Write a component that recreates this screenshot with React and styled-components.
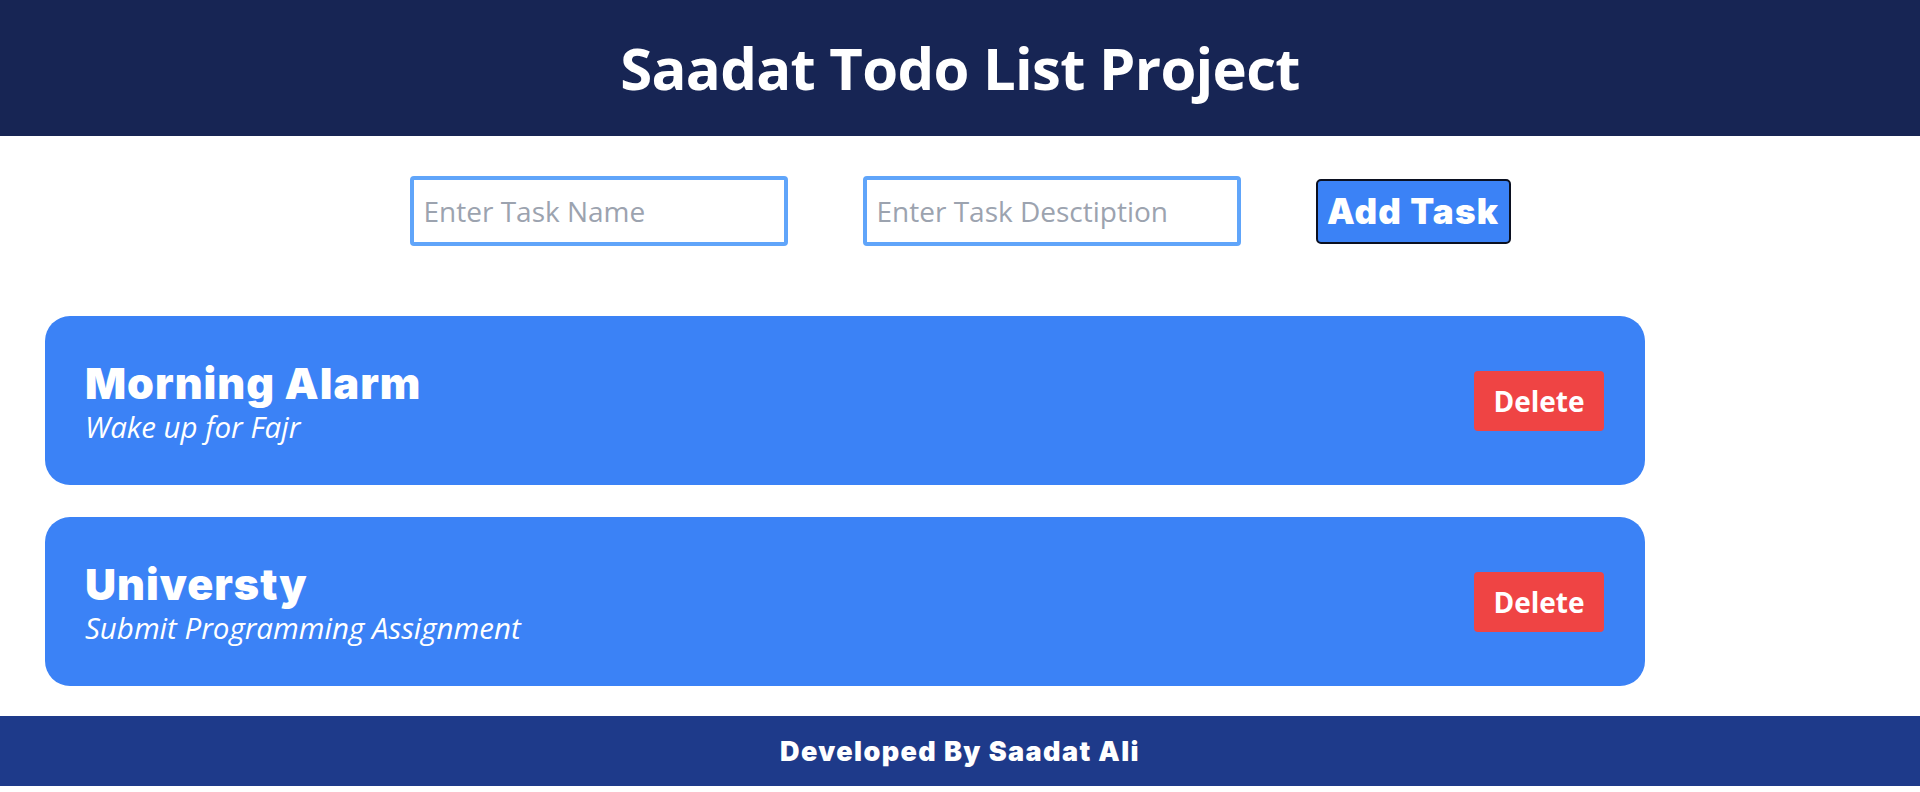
import styled, { createGlobalStyle } from "styled-components";

const TASKS = [
  { name: "Morning Alarm", desc: "Wake up for Fajr" },
  { name: "Universty", desc: "Submit Programming Assignment" }
];

const GlobalStyle = createGlobalStyle`
  body {
    margin: 0;
    background: #ffffff;
    font-family: "Open Sans", "Noto Sans", sans-serif;
  }
`;

const Header = styled.header`
  height: 136px;
  background: #172554;
  display: flex;
  align-items: center;
  justify-content: center;
`;

const Title = styled.h1`
  margin: 0;
  color: #ffffff;
  font-size: 58px;
  font-weight: 700;
  letter-spacing: -0.7px;
  line-height: 1;
`;

const Form = styled.form`
  display: flex;
  align-items: center;
  justify-content: center;
  gap: 75px;
  margin-top: 40px;
`;

const Input = styled.input`
  box-sizing: border-box;
  width: 378px;
  height: 70px;
  border: 4px solid #60a5fa;
  border-radius: 4px;
  padding: 0 10px;
  font-family: "Open Sans", sans-serif;
  font-size: 28px;
  color: #111827;
  outline: none;
  &::placeholder {
    color: #9ca3af;
  }
`;

const AddButton = styled.button`
  box-sizing: border-box;
  width: 195px;
  height: 65px;
  background: #3b82f6;
  border: 2px solid #0b1020;
  border-radius: 5px;
  color: #ffffff;
  font-family: "Inter", sans-serif;
  font-weight: 900;
  font-size: 35px;
  letter-spacing: 1.2px;
  padding: 0;
`;

const List = styled.ul`
  list-style: none;
  margin: 70px 0 0 45px;
  padding: 0;
  width: 1600px;
  display: flex;
  flex-direction: column;
  gap: 32px;
`;

const Card = styled.li`
  box-sizing: border-box;
  height: 169px;
  background: #3b82f6;
  border-radius: 25px;
  padding: 4px 41px 0 40px;
  display: flex;
  align-items: center;
  justify-content: space-between;
`;

const CardText = styled.div`
  display: flex;
  flex-direction: column;
  gap: 2px;
  color: #ffffff;
`;

const CardTitle = styled.h2`
  margin: 0;
  font-family: "Inter", sans-serif;
  font-weight: 900;
  font-size: 43px;
  letter-spacing: 1px;
  line-height: 1.1;
`;

const CardDesc = styled.p`
  margin: 0;
  font-style: italic;
  font-size: 29.5px;
  line-height: 1.2;
`;

const DeleteButton = styled.button`
  width: 130px;
  height: 60px;
  margin-top: -4px;
  background: #ef4444;
  border: none;
  border-radius: 4px;
  color: #ffffff;
  font-family: "Open Sans", sans-serif;
  font-weight: 700;
  font-size: 28px;
  padding: 0;
`;

const Footer = styled.footer`
  margin-top: 30px;
  height: 70px;
  background: #1e3a8a;
  display: flex;
  align-items: center;
  justify-content: center;
  color: #ffffff;
  font-family: "Inter", sans-serif;
  font-weight: 900;
  font-size: 27px;
  letter-spacing: 1.4px;
`;

export default function App() {
  return (
    <>
      <GlobalStyle />
      <Header>
        <Title>Saadat Todo List Project</Title>
      </Header>
      <Form onSubmit={e => e.preventDefault()}>
        <Input placeholder="Enter Task Name" />
        <Input placeholder="Enter Task Desctiption" />
        <AddButton type="submit">Add Task</AddButton>
      </Form>
      <List>
        {TASKS.map(t => (
          <Card key={t.name}>
            <CardText>
              <CardTitle>{t.name}</CardTitle>
              <CardDesc>{t.desc}</CardDesc>
            </CardText>
            <DeleteButton>Delete</DeleteButton>
          </Card>
        ))}
      </List>
      <Footer>Developed By Saadat Ali</Footer>
    </>
  );
}
